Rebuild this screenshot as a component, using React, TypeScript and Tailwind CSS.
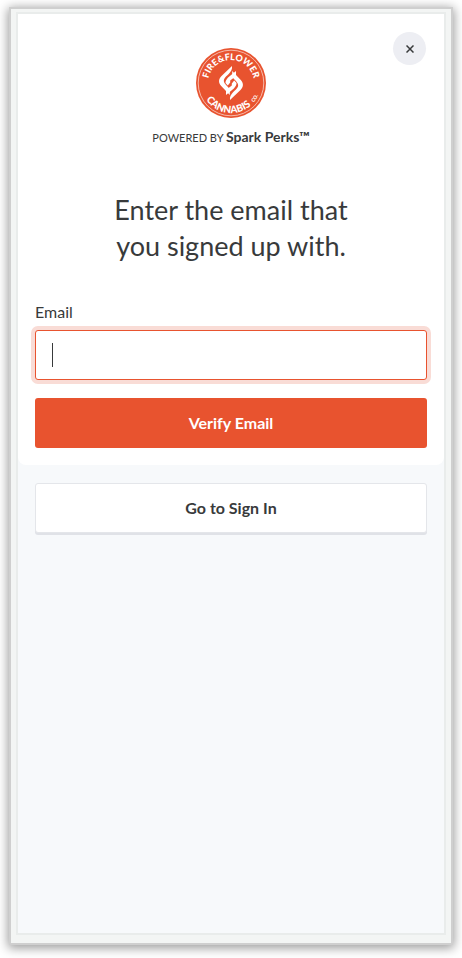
import { FC } from 'react';

const Logo: FC = () => (
  <svg viewBox="0 0 70 70" className="size-[70px]" role="img" aria-label="Fire & Flower Cannabis Co.">
    <defs>
      <path id="logo-top" d="M12 35a23 23 0 0 1 46 0" />
      <path id="logo-bottom" d="M5 35a30 30 0 0 0 60 0" />
    </defs>
    <circle cx="35" cy="35" r="35" fill="#e8532f" />
    <circle cx="35" cy="35" r="32.800" fill="none" stroke="#fff" strokeOpacity="0.75" strokeWidth="0.8" />
    <g fill="#fff" fontFamily="Lato, sans-serif" fontWeight="900" textAnchor="middle">
      <text fontSize="9">
        <textPath href="#logo-top" startOffset="50%">
          FIRE&amp;FLOWER
        </textPath>
      </text>
      <text fontSize="10">
        <textPath href="#logo-bottom" startOffset="46%">
          CANNABIS
        </textPath>
      </text>
      <text fontSize="5">
        <textPath href="#logo-bottom" startOffset="82%">
          CO.
        </textPath>
      </text>
    </g>
    <g fill="#fff">
      <path d="M36 18C37 24.500 29.500 27.500 28 31.500C27.300 34 28.500 35.500 33.800 41V47L25.200 38C22.300 34.800 22.300 31.500 25.500 28Z" />
      <path d="M29.500 35C29.500 31 33 28.500 40 23V28L34.200 32.500V34.500L31.800 37.500Z" />
      <path d="M34 52C33 45.500 40.500 42.500 42 38.500C42.700 36 41.500 34.500 36.200 29L36.200 23L44.800 32C47.700 35.200 47.700 38.500 44.500 42Z" />
      <path d="M40.500 35C40.500 39 37 41.500 30 47V42L35.800 37.500V35.500L38.200 32.500Z" />
    </g>
  </svg>
);

const App: FC = () => {
  return (
    <main className="flex min-h-screen bg-white px-[9px] pt-[7px] pb-[13px] font-[Lato,sans-serif] text-[#383a3b]">
      <div className="flex flex-1 border-2 border-[#cfcfcf] bg-[#f3f5f4] px-[5px] pt-[3px] pb-2 shadow-[0_2px_10px_1px_rgba(0,0,0,0.4)]">
        <div className="relative flex-1 border-2 border-[#e9eceb] bg-[#f7f9fb]">
          <section className="rounded-b-lg bg-white px-[17px] pt-[34px] pb-[17px]">
            <button
              type="button"
              aria-label="Close"
              className="absolute top-[18px] right-[18px] flex size-[33px] items-center justify-center rounded-full bg-[#edeef3]"
            >
              <svg viewBox="0 0 8 8" className="size-2" fill="none" stroke="#383a3b" strokeWidth="1.500">
                <path d="M.5.5l7 7M7.500.5l-7 7" />
              </svg>
            </button>
            <header className="flex flex-col items-center">
              <Logo />
              <p className="mt-[9px] text-[11px] leading-5">
                POWERED BY <strong className="text-[14px] font-bold">Spark Perks™</strong>
              </p>
              <h1 className="mt-11 text-center text-[27px] leading-9">
                Enter the email that
                <br />
                you signed up with.
              </h1>
            </header>
            <form className="mt-9">
              <label htmlFor="email" className="block text-base leading-6">
                Email
              </label>
              <div className="relative mt-[6px]">
                <input
                  id="email"
                  type="email"
                  className="block h-[50px] w-full rounded-[3px] border border-[#e8532f] bg-white px-4 text-base caret-transparent ring-4 ring-[#f9dcd6] outline-none"
                />
                <span className="pointer-events-none absolute top-[13px] left-[17px] h-6 w-px bg-[#383a3b]" />
              </div>
              <button
                type="button"
                className="mt-[18px] h-[50px] w-full rounded-[3px] bg-[#e8532f] text-base font-bold text-white"
              >
                Verify Email
              </button>
            </form>
          </section>
          <div className="px-[17px] pt-[18px]">
            <button
              type="button"
              className="h-[50px] w-full rounded-[3px] border border-[#e4e6ea] bg-white text-base font-bold shadow-[0_2px_0_#e0e2e7]"
            >
              Go to Sign In
            </button>
          </div>
        </div>
      </div>
    </main>
  );
};

export default App;
